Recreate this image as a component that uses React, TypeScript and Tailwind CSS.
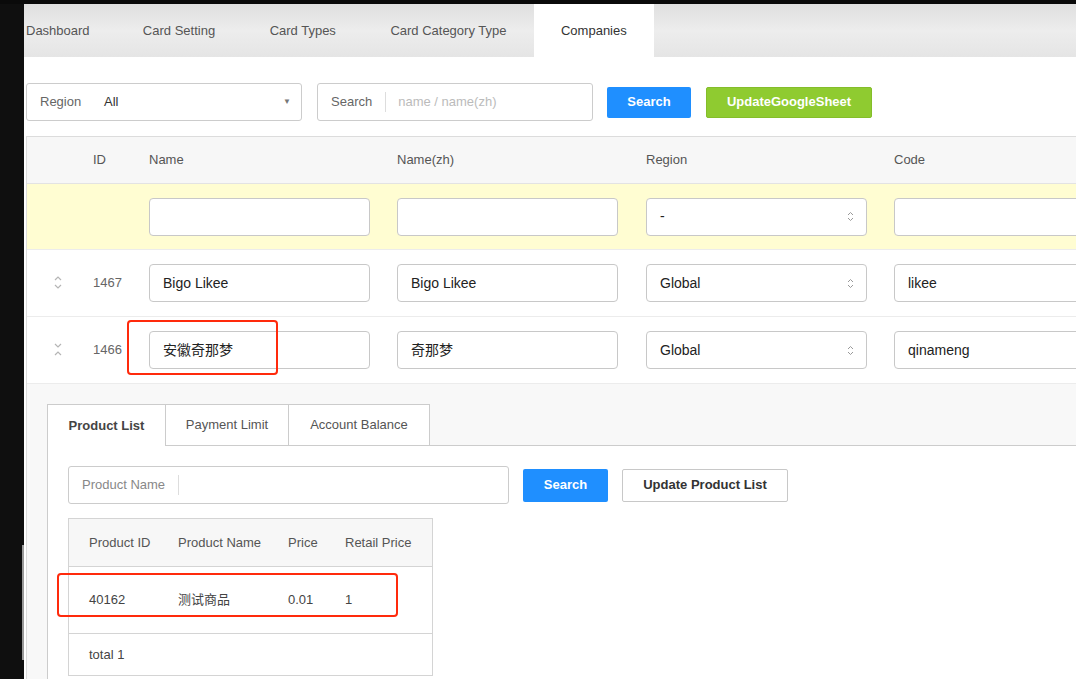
import { ChevronDown } from 'lucide-react';

const navTabs = ['Dashboard', 'Card Setting', 'Card Types', 'Card Category Type', 'Companies'];

const cols = 'grid grid-cols-[53px_56px_248px_249px_248px_248px]';

function SortIcon({ collapsed }: { collapsed?: boolean }) {
  return (
    <svg width="10" height="16" viewBox="0 0 10 16" fill="none" stroke="#b5b5b5" strokeWidth="1.2">
      {collapsed ? (
        <>
          <polyline points="2,2 5,5 8,2" />
          <polyline points="2,13 5,10 8,13" />
        </>
      ) : (
        <>
          <polyline points="2,5 5,2 8,5" />
          <polyline points="2,10 5,13 8,10" />
        </>
      )}
    </svg>
  );
}

function SelectArrows() {
  return (
    <svg width="7" height="11" viewBox="0 0 7 11" fill="none" stroke="#999" strokeWidth="1">
      <polyline points="1,4 3.5,1.5 6,4" />
      <polyline points="1,7 3.5,9.5 6,7" />
    </svg>
  );
}

function Field({ value, select }: { value?: string; select?: boolean }) {
  return (
    <div className="h-[38px] w-[221px] rounded-[4px] border border-[#c8c8c8] bg-white flex items-center pl-[13px] pr-[12px] text-[14px] text-[#222]">
      <span className="flex-1">{value}</span>
      {select && <SelectArrows />}
    </div>
  );
}

function CodeField({ value }: { value?: string }) {
  return (
    <div className="h-[38px] w-[240px] rounded-[4px] border border-[#c8c8c8] bg-white flex items-center pl-[13px] text-[14px] text-[#222]">
      {value}
    </div>
  );
}

const rows = [
  { id: '1467', name: 'Bigo Likee', zh: 'Bigo Likee', region: 'Global', code: 'likee', collapsed: false },
  { id: '1466', name: '安徽奇那梦', zh: '奇那梦', region: 'Global', code: 'qinameng', collapsed: true },
];

export default function App() {
  return (
    <div className="relative h-[679px] w-[1076px] overflow-hidden bg-white font-['Liberation_Sans','Noto_Sans_CJK_SC',sans-serif]">
      <div className="h-[4px] bg-[#0a0a0a]" />
      <div className="flex h-[675px]">
        <div className="w-[24px] shrink-0 bg-[#0f0f0f] flex flex-col">
          <div className="h-[541px]" />
          <div className="ml-[22px] w-[2px] h-[115px] bg-[#9a9a9a]" />
        </div>
        <div className="flex-1 min-w-0 overflow-hidden">
          {/* top nav */}
          <div className="h-[53px] flex bg-linear-to-b from-[#dfdfdf] via-[#ededed] to-[#e5e5e5]">
            {navTabs.map((t, i) => (
              <div
                key={t}
                className={`h-full flex items-center text-[13px] ${i === 0 ? 'pl-[2px] pr-[26px]' : 'px-[27.25px]'} ${
                  t === 'Companies' ? 'bg-white text-[#333]' : 'text-[#555]'
                }`}
              >
                {t}
              </div>
            ))}
          </div>

          {/* filters */}
          <div className="pl-[2px] pt-[26px] flex items-center h-[64px]">
            <div className="w-[276px] h-[38px] rounded-[3px] border border-[#ccc] flex items-center pl-[13px] pr-[10px] text-[13px]">
              <span className="text-[#666] w-[64px]">Region</span>
              <span className="text-[#333] flex-1">All</span>
              <span className="text-[#777] text-[8px]">▼</span>
            </div>
            <div className="ml-[15px] w-[276px] h-[38px] rounded-[3px] border border-[#ccc] flex items-center pl-[13px] text-[13px]">
              <span className="text-[#666] pr-[13px] border-r border-[#ddd] leading-[20px]">Search</span>
              <span className="text-[#bbb] pl-[12px]">name / name(zh)</span>
            </div>
            <button className="ml-[14px] w-[84px] h-[31px] rounded-[2px] bg-[#1f8fff] text-white text-[13px] font-bold">
              Search
            </button>
            <button className="ml-[15px] w-[166px] h-[31px] rounded-[2px] bg-[#8fcb30] border border-[#84bd2a] text-white text-[13px] font-bold">
              UpdateGoogleSheet
            </button>
          </div>

          {/* companies table */}
          <div className="ml-[2px] mt-[15px] border-l border-t border-[#dcdcdc] w-[1200px]">
            <div className={`${cols} h-[47px] items-center bg-[#f7f7f7] border-b border-[#e3e3e3] text-[13px] text-[#555]`}>
              <div />
              <div className="pl-[13px]">ID</div>
              <div className="pl-[13px]">Name</div>
              <div className="pl-[13px]">Name(zh)</div>
              <div className="pl-[13px]">Region</div>
              <div className="pl-[13px]">Code</div>
            </div>
            <div className={`${cols} h-[66px] items-center bg-[#fffdd2] border-b border-[#ececec]`}>
              <div />
              <div />
              <div className="pl-[13px]"><Field /></div>
              <div className="pl-[13px]"><Field /></div>
              <div className="pl-[13px]"><Field value="-" select /></div>
              <div className="pl-[13px]"><CodeField /></div>
            </div>
            {rows.map((r) => (
              <div key={r.id} className={`${cols} h-[67px] items-center border-b border-[#ececec]`}>
                <div className="flex justify-center pl-[8px]"><SortIcon collapsed={r.collapsed} /></div>
                <div className="pl-[13px] text-[13px] text-[#666]">{r.id}</div>
                <div className="pl-[13px]"><Field value={r.name} /></div>
                <div className="pl-[13px]"><Field value={r.zh} /></div>
                <div className="pl-[13px]"><Field value={r.region} select /></div>
                <div className="pl-[13px]"><CodeField value={r.code} /></div>
              </div>
            ))}

            {/* expanded row */}
            <div className="bg-[#f8f8f8] pt-[20px] pl-[20px] h-[300px]">
              <div className="flex text-[13px] h-[42px]">
                <div className="w-[119px] flex items-center justify-center bg-white border border-b-0 border-[#ccc] font-bold text-[#444]">
                  Product List
                </div>
                <div className="w-[123px] flex items-center justify-center bg-white border-t border-r border-b border-[#ccc] text-[#555]">
                  Payment Limit
                </div>
                <div className="w-[141px] flex items-center justify-center bg-white border-t border-r border-b border-[#ccc] text-[#555]">
                  Account Balance
                </div>
                <div className="flex-1 border-b border-[#ccc]" />
              </div>
              <div className="bg-white border-l border-[#ccc] h-full pt-[20px] pl-[20px]">
                <div className="flex items-center">
                  <div className="w-[441px] h-[38px] rounded-[3px] border border-[#ccc] flex items-center pl-[13px] text-[13px]">
                    <span className="text-[#888] pr-[13px] border-r border-[#ddd] leading-[20px]">Product Name</span>
                  </div>
                  <button className="ml-[14px] w-[85px] h-[33px] rounded-[2px] bg-[#1f8fff] text-white text-[13px] font-bold">
                    Search
                  </button>
                  <button className="ml-[14px] w-[166px] h-[33px] rounded-[2px] bg-white border border-[#c8c8c8] text-[#333] text-[13px] font-bold">
                    Update Product List
                  </button>
                </div>

                <div className="mt-[14px] w-[365px] border border-[#d4d4d4] text-[13px]">
                  <div className="grid grid-cols-[89px_110px_57px_107px] h-[48px] items-center bg-[#f7f7f7] border-b border-[#d4d4d4] text-[#555]">
                    <div className="pl-[20px]">Product ID</div>
                    <div className="pl-[20px]">Product Name</div>
                    <div className="pl-[20px]">Price</div>
                    <div className="pl-[20px]">Retail Price</div>
                  </div>
                  <div className="grid grid-cols-[89px_110px_57px_107px] h-[67px] items-center border-b border-[#d4d4d4] text-[#444]">
                    <div className="pl-[20px]">40162</div>
                    <div className="pl-[20px]">测试商品</div>
                    <div className="pl-[20px]">0.01</div>
                    <div className="pl-[20px]">1</div>
                  </div>
                  <div className="h-[41px] flex items-center pl-[20px] text-[#444]">total 1</div>
                </div>
              </div>
            </div>
          </div>
        </div>
      </div>

      {/* annotation boxes */}
      <div className="absolute left-[127px] top-[320px] w-[151px] h-[55px] rounded-[4px] border-[2.5px] border-[#ff2a0c]" />
      <div className="absolute left-[57px] top-[573px] w-[341px] h-[44px] rounded-[4px] border-[2.5px] border-[#ff2a0c]" />
    </div>
  );
}
